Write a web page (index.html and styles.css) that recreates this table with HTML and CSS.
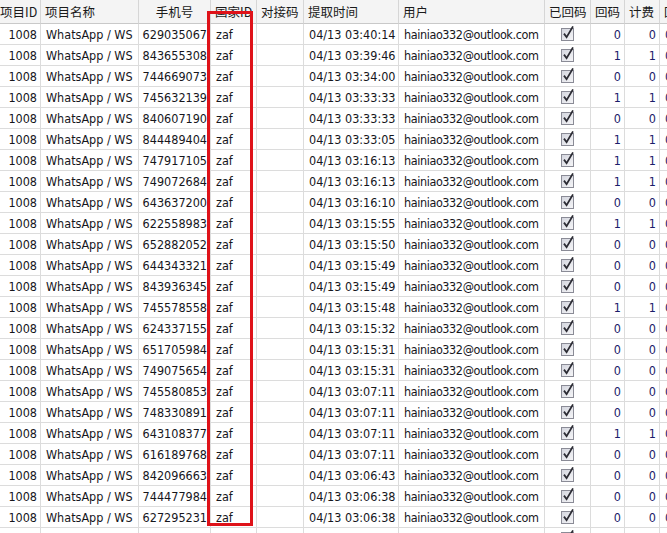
FILE: index.html
```html
<!DOCTYPE html>
<html lang="zh-CN">

<head>
    <meta charset="UTF-8">
    <meta name="viewport" content="width=device-width, initial-scale=1.0">
    <link rel="stylesheet" href="styles.css">
    <title>取号记录</title>
</head>

<body>
    <div class="tablaMarco">
        <table class="tablaDatos">
            <colgroup>
                <col class="cId">
                <col class="cNombre">
                <col class="cTel">
                <col class="cPais">
                <col class="cCodigo">
                <col class="cTiempo">
                <col class="cUsuario">
                <col class="cCheck">
                <col class="cNum">
                <col class="cNum2">
                <col class="cExtra">
            </colgroup>
            <thead>
                <tr>
                    <th class="izq">项目ID</th>
                    <th class="izq">项目名称</th>
                    <th>手机号</th>
                    <th class="izq">国家ID</th>
                    <th class="izq">对接码</th>
                    <th class="izq">提取时间</th>
                    <th class="izq">用户</th>
                    <th>已回码</th>
                    <th class="izq">回码</th>
                    <th class="izq">计费</th>
                    <th class="izq">回调</th>
                </tr>
            </thead>
            <tbody id="filas"></tbody>
        </table>
        <!-- marco rojo que resalta la columna del pais -->
        <div class="marcoRojo"></div>
    </div>
    <script>
        // datos: telefono, hora, codigo devuelto
        let datos = [
            ["629035067", "03:40:14", 0], ["843655308", "03:39:46", 1], ["744669073", "03:34:00", 0],
            ["745632139", "03:33:33", 1], ["840607190", "03:33:33", 0], ["844489404", "03:33:05", 1],
            ["747917105", "03:16:13", 1], ["749072684", "03:16:13", 1], ["643637200", "03:16:10", 0],
            ["622558983", "03:15:55", 1], ["652882052", "03:15:50", 0], ["644343321", "03:15:49", 0],
            ["843936345", "03:15:49", 0], ["745578558", "03:15:48", 1], ["624337155", "03:15:32", 0],
            ["651705984", "03:15:31", 0], ["749075654", "03:15:31", 0], ["745580853", "03:07:11", 0],
            ["748330891", "03:07:11", 0], ["643108377", "03:07:11", 1], ["616189768", "03:07:11", 0],
            ["842096663", "03:06:43", 0], ["744477984", "03:06:38", 0], ["627295231", "03:06:38", 0]
        ];
        let check = '<svg class="casilla" width="16" height="16" viewBox="0 0 16 16">' +
            '<defs><linearGradient id="g" x1="0" y1="0" x2="1" y2="1"><stop offset="0" stop-color="#d3d5de"/><stop offset="1" stop-color="#f6f6f8"/></linearGradient></defs>' +
            '<rect x="1.5" y="3.5" width="12" height="12" fill="url(#g)" stroke="#8a8b96"/>' +
            '<path d="M4 8.6 L6.6 12.2 L13 1.4" fill="none" stroke="#2b2b33" stroke-width="1.8"/></svg>';
        let html = "";
        for (const d of datos) {
            html += "<tr><td class='der'>1008</td><td>WhatsApp / WS</td><td class='der'>" + d[0] +
                "</td><td>zaf</td><td></td><td>04/13 " + d[1] + "</td><td class='correo'>hainiao332@outlook.com</td><td class='centro'>" +
                check + "</td><td class='der num'>" + d[2] + "</td><td class='der num'>" + d[2] +
                "</td><td class='num'>0</td></tr>";
        }
        html += "<tr><td></td><td></td><td></td><td></td><td></td><td></td><td></td><td class='centro'>" + check +
            "</td><td></td><td></td><td></td></tr>";
        document.getElementById("filas").innerHTML = html;
    </script>
</body>

</html>
```

FILE: styles.css
```css
body {
    margin: 0px;
    background-color: #fff;
    overflow: hidden;
}

.tablaMarco {
    position: relative;
    width: 667px;
    height: 533px;
    overflow: hidden;
}

.tablaDatos {
    table-layout: fixed;
    border-collapse: separate;
    border-spacing: 0px;
    width: 700px;
    font-family: "DejaVu Sans", "Noto Sans CJK SC", sans-serif;
    font-stretch: condensed;
    font-size: 12.5px;
    color: #16161c;
}

.cId { width: 41px; }
.cNombre { width: 98px; }
.cTel { width: 72px; }
.cPais { width: 46px; }
.cCodigo { width: 47px; }
.cTiempo { width: 95px; }
.cUsuario { width: 146px; }
.cCheck { width: 46px; }
.cNum { width: 34px; }
.cNum2 { width: 35px; }
.cExtra { width: 40px; }

.tablaDatos th {
    height: 24px;
    padding: 0px 4px;
    box-sizing: border-box;
    font-family: "Noto Sans CJK SC", sans-serif;
    font-weight: normal;
    font-size: 12.5px;
    color: #1a1a1a;
    background-color: #f4f4f4;
    border-right: 1px solid #d6d6d6;
    border-bottom: 1px solid #c9c9c9;
    white-space: nowrap;
    overflow: hidden;
    text-align: center;
}

.tablaDatos th:first-child {
    padding-left: 0px;
}

.tablaDatos td {
    height: 21px;
    padding: 0px 3px 0px 5px;
    box-sizing: border-box;
    border-right: 1px solid #dcdcdc;
    border-bottom: 1px solid #dcdcdc;
    white-space: nowrap;
    overflow: hidden;
}

.izq {
    text-align: left !important;
}

.tablaDatos td.der {
    text-align: right;
    padding: 0px 3px 0px 2px;
}

.tablaDatos td.centro {
    text-align: center;
    padding: 0px;
}

.tablaDatos td.correo {
    letter-spacing: -0.4px;
    padding-right: 0px;
}

.num {
    color: #1c1c6a;
}

.casilla {
    display: block;
    margin: 0px auto;
    position: relative;
    top: -1px;
}

.marcoRojo {
    position: absolute;
    left: 207px;
    top: 11px;
    width: 46px;
    height: 515px;
    box-sizing: border-box;
    border: 3px solid #df1219;
}
```
